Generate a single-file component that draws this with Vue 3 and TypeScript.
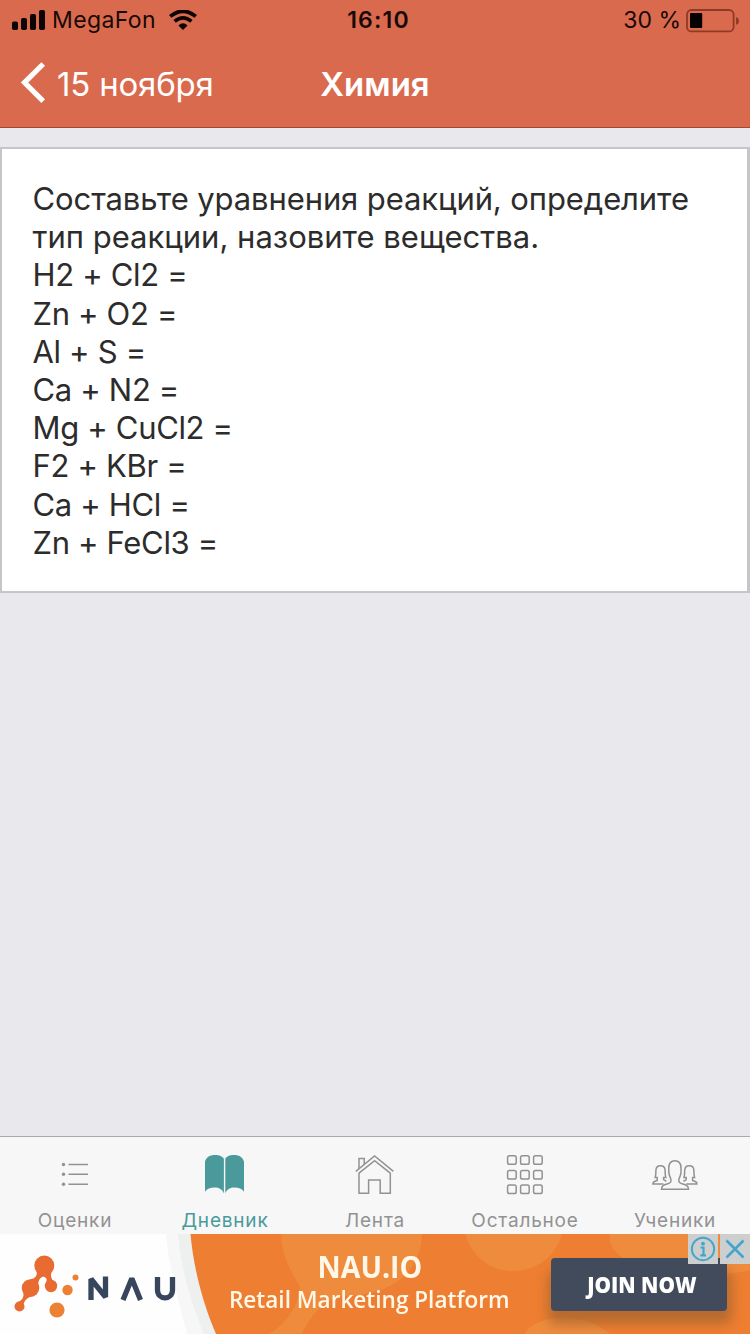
<script setup lang="ts">
interface Tab {
  id: string
  label: string
}

const task: string[] = [
  'Составьте уравнения реакций, определите',
  'тип реакции, назовите вещества.',
]

const equations: string[] = [
  'H2 + Cl2 =',
  'Zn + O2 =',
  'Al + S =',
  'Ca + N2 =',
  'Mg + CuCl2 =',
  'F2 + KBr =',
  'Ca + HCl =',
  'Zn + FeCl3 =',
]

const tabs: Tab[] = [
  { id: 'marks', label: 'Оценки' },
  { id: 'diary', label: 'Дневник' },
  { id: 'feed', label: 'Лента' },
  { id: 'other', label: 'Остальное' },
  { id: 'pupils', label: 'Ученики' },
]
const activeTab = 'diary'

const gridX = [7.6, 20.6, 33.6]
const gridY = [5.7, 20.4, 34.9]
</script>

<template>
  <div class="screen">
    <header class="header">
      <div class="status">
        <div class="status-left">
          <svg class="signal" width="34" height="22" viewBox="0 0 34 22">
            <rect x="0" y="11.5" width="6" height="8.5" rx="1.8" />
            <rect x="9" y="8" width="6" height="12" rx="1.8" />
            <rect x="18" y="4" width="6" height="16" rx="1.8" />
            <rect x="27" y="0" width="6" height="20" rx="1.8" />
          </svg>
          <span class="carrier">MegaFon</span>
          <svg class="wifi" width="28" height="20" viewBox="0 0 28 20">
            <path d="M1.2 6.4Q14 -4 26.800 6.400" fill="none" stroke="#0d0504" stroke-width="3.8" />
            <path d="M5.600 11.400Q14 4.200 22.400 11.400" fill="none" stroke="#0d0504" stroke-width="3.6" />
            <path d="M9.400 15.400Q14 11 18.600 15.400L14 20Z" fill="#0d0504" />
          </svg>
        </div>
        <span class="time">16:10</span>
        <div class="status-right">
          <span class="percent">30 %</span>
          <svg class="battery" width="54" height="24" viewBox="0 0 54 24">
            <rect x="1" y="1" width="46.6" height="21.4" rx="4.5" fill="none" stroke="#8f3a27" stroke-width="1.8" />
            <rect x="4" y="4" width="12.2" height="15" rx="1" fill="#050101" />
            <path d="M50 8.3Q53 9 53 12T50 15.7Z" fill="#8f3a27" />
          </svg>
        </div>
      </div>
      <div class="nav">
        <div class="back">
          <svg class="chevron" width="26" height="42" viewBox="0 0 26 42">
            <path d="M23.200 2L4.500 20.600L23.200 39.200" fill="none" stroke="#fff" stroke-width="5.2" />
          </svg>
          <span class="back-label">15 ноября</span>
        </div>
        <h1 class="title">Химия</h1>
        <div></div>
      </div>
    </header>

    <main class="content">
      <article class="card">
        <p v-for="(line, i) in task" :key="i" class="line" :class="{ first: i === 0 }">{{ line }}</p>
        <p v-for="line in equations" :key="line" class="line equation">{{ line }}</p>
      </article>
    </main>

    <nav class="tabs">
      <div v-for="tab in tabs" :key="tab.id" class="tab" :class="{ active: tab.id === activeTab }">
        <svg class="tab-icon" width="50" height="46" viewBox="0 0 50 46" fill="none" stroke="#929292" stroke-width="1.5">
          <g v-if="tab.id === 'marks'">
            <path d="M18.500 11.500H38M18.500 21.300H38M18.500 31.200H38" />
            <g fill="#929292" stroke="none">
              <circle cx="13.500" cy="11.500" r="1.700" />
              <circle cx="13.500" cy="21.300" r="1.700" />
              <circle cx="13.500" cy="31.200" r="1.700" />
            </g>
          </g>
          <g v-else-if="tab.id === 'diary'" fill="#4a9a9b" stroke="none">
            <path d="M5 38.700V8.500C6.500 4 10 2 14.800 2C19.500 2 22.800 3.500 23.900 6V40.400C22.500 36.500 18.800 34.600 14.600 34.600C10.200 34.600 7 36 5 38.700Z" />
            <path d="M44 38.700V8.500C42.500 4 39 2 34.200 2C29.500 2 26.200 3.500 25.300 6V40.400C26.700 36.500 30.300 34.600 34.500 34.600C38.800 34.600 42 36 44 38.700Z" />
          </g>
          <g v-else-if="tab.id === 'feed'">
            <path d="M5.800 18.300L24.600 3L43.400 18.300" />
            <path d="M9 20.200L24.600 7.700L40.300 20.200V40.300H30.200V27.100H18.600V40.300H9Z" />
            <path d="M9 16V5.400H14.200V11.600" />
          </g>
          <g v-else-if="tab.id === 'other'">
            <template v-for="y in gridY" :key="y">
              <rect v-for="x in gridX" :key="x" :x="x" :y="y - 3" width="8.600" height="8.600" rx="1.800" />
            </template>
          </g>
          <g v-else>
            <path d="M11.500 36.300C11.500 32.500 14 31.800 17 31Q21 30 21 27.500Q21 25.500 19.800 23.500C18.300 20.500 18.800 18.500 18.800 15C18.800 10 21.200 7.700 24.900 7.700S31 10 31 15C31 18.500 31.500 20.500 30 23.500Q28.800 25.500 28.800 27.500Q28.800 30 32.800 31C35.800 31.800 38.500 32.500 38.500 36.300Z" />
            <path d="M13.500 31H2.900C2.900 28.300 5 28.200 7.200 27.500V24.500H5.200C6 22 5.800 20.500 5.900 17.500C6 14.300 7.800 12.800 10.500 12.800S15 14.300 15.100 17.500C15.200 20.500 15 22 15.800 24.500H13.600V26.600L16.400 28.300" />
            <path d="M36.300 31H46.900C46.900 28.300 44.800 28.200 42.600 27.500V24.500H44.600C43.800 22 44 20.500 43.900 17.500C43.800 14.300 42 12.800 39.300 12.800S34.800 14.300 34.700 17.500C34.600 20.500 34.800 22 34 24.500H36.200V26.600L33.400 28.300" />
          </g>
        </svg>
        <span class="tab-label">{{ tab.label }}</span>
      </div>
    </nav>

    <footer class="banner">
      <svg class="banner-art" width="750" height="100" viewBox="0 0 750 100">
        <defs>
          <filter id="soft" x="-20%" y="-40%" width="140%" height="200%">
            <feGaussianBlur stdDeviation="6" />
          </filter>
        </defs>
        <rect width="750" height="100" fill="#fefefe" />
        <path d="M166 0C169 38 181 74 187 100H240V0Z" fill="#f7f7f7" />
        <path d="M178 0C181 38 193 74 204 100H240V0Z" fill="#eeefef" />
        <path d="M190.500 0C194 38 204 72 216 100H750V0Z" fill="#ee7e31" />
        <g fill="#ee8b3d">
          <path d="M281 0C282 25 292 38 300 53C298 75 285 90 269 100H302C311 80 326 64 345 62C390 61 421 40 422 0Z" />
          <path d="M465 0C473 25 491 37 513 37C538 37 557 20 562 0Z" />
          <path d="M610 0H750V36C700 49 603 37 610 0Z" />
          <path d="M524 100C538 78 586 78 610 100Z" />
        </g>
        <rect x="548" y="36" width="184" height="54" rx="8" fill="#a8662f" opacity=".8" filter="url(#soft)" />
        <g fill="#e86c31">
          <circle cx="44.300" cy="31.500" r="10" />
          <circle cx="30.500" cy="54" r="8.800" />
          <circle cx="51" cy="52" r="6.200" />
          <circle cx="19.500" cy="72.500" r="5" />
          <path d="M36.500 37C38 43 34 45 26 46.500L38 58C38 49 38 44 43.500 42.500C46 43.500 48 45 45.500 50L56 50C52 46 49 42 52.500 36Z" />
          <path d="M23 57.500C25 64 21 67 16 69L23 74.500C23 68 26 63 34 62Z" />
        </g>
        <g fill="#ec8035">
          <circle cx="57" cy="76" r="7.600" />
          <circle cx="67.500" cy="56" r="5.200" />
          <circle cx="75.500" cy="43.500" r="3" />
        </g>
        <g fill="none" stroke="#38465d" stroke-width="5.300" stroke-linejoin="bevel">
          <path d="M91 66V45L105.500 63V42.500" />
          <path d="M123 66L131.800 44.500L140.500 66" />
          <path d="M157.500 43V56C157.500 66.500 172.500 66.500 172.500 56V43" />
        </g>
      </svg>
      <div class="pitch">
        <span class="pitch-title">NAU.IO</span>
        <span class="pitch-sub">Retail Marketing Platform</span>
      </div>
      <div class="cta"><span class="cta-label">JOIN NOW</span></div>
      <svg class="ad-controls" width="62" height="30" viewBox="0 0 62 30" fill="none" stroke="#43a5cc">
        <rect width="30" height="30" fill="#cccfce" stroke="none" />
        <rect x="32" width="30" height="30" fill="#cccfce" stroke="none" />
        <circle cx="15" cy="15" r="11.200" stroke-width="1.900" />
        <circle cx="15" cy="9.700" r="1.900" fill="#43a5cc" stroke="none" />
        <path d="M12.500 13.500H15.500V21.300M12.300 21.300H18" stroke-width="2.200" />
        <path d="M38.500 6.500L55.500 23.500M55.500 6.500L38.500 23.500" stroke-width="2.500" />
      </svg>
    </footer>
  </div>
</template>

<style>
body {
  margin: 0;
}
</style>

<style scoped>
.screen {
  display: flex;
  flex-direction: column;
  width: 750px;
  height: 1334px;
  overflow: hidden;
  background: #e9e8ed;
  font-family: Inter, "Liberation Sans", sans-serif;
}
.header {
  box-sizing: border-box;
  height: 128px;
  background: #da6a4e;
  border-bottom: 1px solid #a54732;
}
.status {
  display: grid;
  grid-template-columns: 1fr auto 1fr;
  align-items: center;
  height: 41px;
  color: #180907;
  font-size: 23px;
  line-height: 41px;
}
.status-left,
.status-right {
  display: flex;
  align-items: center;
}
.status-left {
  padding-left: 12px;
}
.signal {
  margin-top: 1px;
  fill: #0d0504;
}
.carrier {
  margin-left: 6px;
  letter-spacing: 0.4px;
}
.wifi {
  margin-left: 13px;
  margin-bottom: 1px;
}
.time {
  padding-left: 7px;
  font-weight: 600;
  letter-spacing: 1.2px;
}
.status-right {
  justify-content: flex-end;
  padding-right: 10px;
}
.battery {
  margin-left: 5px;
}
.nav {
  display: grid;
  grid-template-columns: 1fr auto 1fr;
  align-items: center;
  height: 86px;
  color: #fff;
  font-size: 33px;
}
.back {
  display: flex;
  align-items: center;
  padding-left: 20px;
}
.chevron {
  margin-bottom: 3px;
}
.back-label {
  margin-left: 11px;
  letter-spacing: -0.2px;
}
.title {
  margin: 0;
  font-size: 33px;
  font-weight: 600;
}
.content {
  flex: 1;
  padding-top: 19px;
}
.card {
  box-sizing: border-box;
  height: 446px;
  padding: 31px 31px 0 30.5px;
  border: 2px solid #c6c5ca;
  border-right-width: 3px;
  background: #fff;
  color: #2c2c2c;
}
.line {
  margin: 0;
  font-size: 31px;
  line-height: 38.2px;
  white-space: nowrap;
}
.line.first {
  letter-spacing: -0.1px;
}
.line.equation {
  letter-spacing: -0.33px;
}
.tabs {
  display: grid;
  grid-template-columns: repeat(5, 1fr);
  box-sizing: border-box;
  height: 98px;
  border-top: 1px solid #a9a9ab;
  background: #f7f7f7;
}
.tab {
  display: flex;
  flex-direction: column;
  align-items: center;
  padding-top: 16px;
  color: #929292;
}
.tab-label {
  margin-top: 10px;
  font-size: 19px;
  line-height: 24px;
  letter-spacing: 0.8px;
}
.tab.active {
  color: #4a9a9b;
}
.banner {
  position: relative;
  display: flex;
  height: 100px;
  font-family: "Open Sans", "Noto Sans", sans-serif;
  color: #fff;
}
.banner-art {
  position: absolute;
  inset: 0;
}
.pitch {
  position: relative;
  display: flex;
  flex-direction: column;
  align-items: center;
  width: 281px;
  margin-left: 229px;
  padding-top: 15px;
  color: #fff8e8;
  white-space: nowrap;
}
.pitch-title {
  font-size: 31px;
  font-weight: 700;
  line-height: 35px;
  transform: scaleX(0.92);
}
.pitch-sub {
  font-size: 24px;
  font-weight: 600;
  line-height: 30px;
  transform: scaleX(0.94);
}
.cta {
  position: relative;
  display: flex;
  align-items: center;
  justify-content: center;
  width: 176px;
  height: 53px;
  margin: 24px 0 0 41px;
  padding: 0 0 2px 5px;
  box-sizing: border-box;
  border-radius: 4px;
  background: #424b5b;
  font-size: 22px;
  font-weight: 800;
  white-space: nowrap;
}
.cta-label {
  transform: scaleX(0.945);
}
.ad-controls {
  position: absolute;
  top: 0;
  right: 0;
}
</style>
